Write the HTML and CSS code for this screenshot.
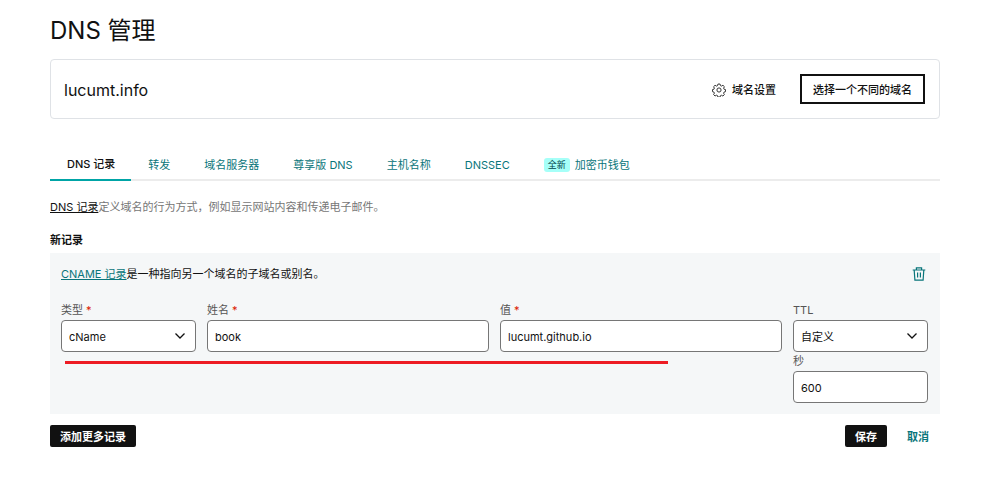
FILE: index.html
```html
<!DOCTYPE html>
<html lang="zh-CN">
<head>
<meta charset="utf-8">
<meta name="viewport" content="width=device-width, initial-scale=1">
<title>DNS 管理</title>
<link rel="stylesheet" href="styles.css">
</head>
<body>
<main class="page">
  <h1 class="title">DNS 管理</h1>

  <section class="domain-card">
    <h2 class="domain-name">lucumt.info</h2>
    <a class="settings-link" href="#settings">
      <svg class="icon-gear" viewBox="0 0 24 24" aria-hidden="true">
        <path d="M10.2 1.8h3.6l.7 2.7 1.8.8 2.5-1.4 2.5 2.5-1.4 2.4.8 1.9 2.5.6v3.5l-2.6.8-.7 1.9 1.3 2.4-2.5 2.5-2.4-1.4-1.9.8-.6 2.4h-3.6l-.7-2.5-1.9-.8-2.4 1.4-2.5-2.5 1.4-2.4-.8-1.8-2.5-.8v-3.5l2.6-.7.7-1.8-1.4-2.4 2.5-2.5 2.5 1.4 1.8-.8z"/>
        <circle cx="12" cy="12" r="3.6"/>
      </svg>
      <span>域名设置</span>
    </a>
    <button class="btn-outline" type="button">选择一个不同的域名</button>
  </section>

  <nav class="tabs">
    <a class="tab tab-active" href="#records" aria-current="page">DNS 记录</a>
    <a class="tab" href="#forward">转发</a>
    <a class="tab" href="#nameservers">域名服务器</a>
    <a class="tab" href="#premium">尊享版 DNS</a>
    <a class="tab" href="#hosts">主机名称</a>
    <a class="tab" href="#dnssec">DNSSEC</a>
    <a class="tab" href="#wallet"><span class="badge">全新</span>加密币钱包</a>
  </nav>

  <p class="intro"><a class="intro-link" href="#about">DNS 记录</a>定义域名的行为方式，例如显示网站内容和传递电子邮件。</p>

  <h3 class="subtitle">新记录</h3>

  <form class="record-form">
    <div class="panel">
      <div class="panel-head">
        <p class="panel-text"><a class="panel-link" href="#cname">CNAME 记录</a>是一种指向另一个域名的子域名或别名。</p>
        <button class="btn-icon" type="button" aria-label="删除">
          <svg class="icon-trash" viewBox="0 0 14 14" aria-hidden="true">
            <path d="M.7 3h12.600M4.400 2.800V.8h5.200v2M2.200 3.200l.7 10h8.200l.7-10M5.600 5.600v5M8.400 5.600v5"/>
          </svg>
        </button>
      </div>
      <div class="fields">
        <div class="field">
          <label class="label" for="type">类型 <span class="required">*</span></label>
          <div class="select-wrap">
            <select class="control" id="type"><option>cName</option></select>
            <svg class="chevron" viewBox="0 0 12 12" aria-hidden="true"><path d="M1.500 3.500L6 8l4.500-4.500"/></svg>
          </div>
        </div>
        <div class="field">
          <label class="label" for="name">姓名 <span class="required">*</span></label>
          <input class="control" id="name" type="text" value="book">
        </div>
        <div class="field">
          <label class="label" for="value">值 <span class="required">*</span></label>
          <input class="control" id="value" type="text" value="lucumt.github.io">
        </div>
        <div class="field">
          <label class="label" for="ttl">TTL</label>
          <div class="select-wrap">
            <select class="control" id="ttl"><option>自定义</option></select>
            <svg class="chevron" viewBox="0 0 12 12" aria-hidden="true"><path d="M1.500 3.500L6 8l4.500-4.500"/></svg>
          </div>
          <label class="label" for="seconds">秒</label>
          <input class="control" id="seconds" type="text" value="600">
        </div>
      </div>
      <div class="underline-mark"></div>
    </div>
    <div class="actions">
      <button class="btn-dark" type="button">添加更多记录</button>
      <button class="btn-dark btn-save" type="submit">保存</button>
      <button class="btn-text" type="button">取消</button>
    </div>
  </form>
</main>
</body>
</html>
```

FILE: styles.css
```css
* {
  box-sizing: border-box;
}

body {
  margin: 0;
  background: #fff;
  color: #111;
  font-family: Inter, "Noto Sans CJK SC", sans-serif;
  font-size: 11px;
  line-height: 16px;
}

h1, h2, h3, p {
  margin: 0;
}

button, input, select {
  font: inherit;
  color: inherit;
}

button {
  cursor: pointer;
}

.page {
  padding: 13px 60px 24px 50px;
}

.title {
  margin-bottom: 10px;
  font-size: 24px;
  font-weight: 400;
  line-height: 36px;
}

.domain-card {
  display: flex;
  align-items: center;
  padding: 14px 14px 14px 13px;
  border: 1px solid #dfe2e6;
  border-radius: 4px;
}

.domain-name {
  flex: 1;
  padding-top: 2px;
  font-size: 16px;
  font-weight: 400;
  line-height: 24px;
}

.settings-link {
  display: flex;
  align-items: center;
  gap: 6px;
  margin-right: 24px;
  padding-top: 1px;
  color: #111;
  font-weight: 500;
  text-decoration: none;
}

.icon-gear {
  width: 14px;
  height: 14px;
  fill: none;
  stroke: #333;
  stroke-width: 1.7;
  stroke-linejoin: round;
}

.btn-outline {
  height: 30px;
  padding: 2px 11px 0;
  border: 2px solid #111;
  background: #fff;
  font-weight: 500;
}

.tabs {
  display: flex;
  margin-top: 30px;
  border-bottom: 2px solid #ececec;
}

.tab {
  display: flex;
  align-items: center;
  height: 32px;
  margin-bottom: -2px;
  padding: 2px 17px 0;
  border-bottom: 2px solid transparent;
  color: #09757a;
  text-decoration: none;
}

.tab-active {
  padding: 0 16px 0 17px;
  border-bottom-color: #00a4a6;
  color: #111;
  font-weight: 500;
}

.badge {
  margin-right: 5px;
  padding: 0 4px;
  border-radius: 3px;
  background: #a6fff8;
  color: #004249;
  font-size: 9px;
  line-height: 14px;
}

.intro {
  margin-top: 18px;
  color: #767676;
}

.intro-link {
  color: #111;
}

.subtitle {
  margin: 17px 0 5px;
  font-size: 11px;
  font-weight: 700;
}

.panel {
  position: relative;
  padding: 12px 12px 11px 11px;
  background: #f5f7f8;
}

.panel-head {
  display: flex;
  align-items: center;
  justify-content: space-between;
}

.panel-link {
  color: #09757a;
}

.btn-icon {
  display: flex;
  padding: 2px;
  border: 0;
  background: none;
}

.icon-trash {
  width: 14px;
  height: 14px;
  fill: none;
  stroke: #09757a;
  stroke-width: 1.2;
}

.fields {
  display: grid;
  grid-template-columns: 135px 1fr 1fr 135px;
  gap: 11px;
  margin-top: 18px;
}

.label {
  display: block;
  color: #555;
  line-height: 19px;
}

.required {
  color: #db1802;
}

.control {
  display: block;
  width: 100%;
  height: 32px;
  padding: 2px 7px 0;
  border: 1px solid #767676;
  border-radius: 4px;
  background: #fff;
  appearance: none;
}

.select-wrap {
  position: relative;
}

.chevron {
  position: absolute;
  top: 10px;
  right: 10px;
  width: 12px;
  height: 12px;
  fill: none;
  stroke: #111;
  stroke-width: 1.3;
  pointer-events: none;
}

.underline-mark {
  position: absolute;
  top: 108px;
  left: 15px;
  width: 603px;
  max-width: 68%;
  height: 3px;
  background: #ed1c24;
}

.actions {
  display: flex;
  align-items: center;
  margin-top: 11px;
}

.btn-dark {
  height: 22px;
  padding: 1px 10px 0;
  border: 0;
  border-radius: 2px;
  background: #111;
  color: #fff;
  font-weight: 700;
}

.btn-save {
  margin-left: auto;
}

.btn-text {
  margin-left: 9px;
  padding: 1px 11px 0;
  border: 0;
  background: none;
  color: #09757a;
  font-weight: 700;
}
```
